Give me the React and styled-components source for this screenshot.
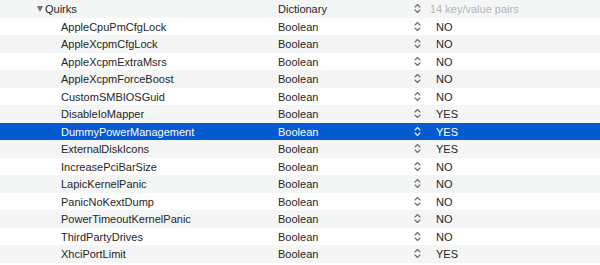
import React from 'react'
import styled, { createGlobalStyle } from 'styled-components'

// Plist editor rows
const Global = createGlobalStyle`
  html, body { margin: 0; padding: 0; background: #fff; }
  body { font-family: "Liberation Sans", Arial, sans-serif; overflow: hidden; }
`

const rows = [
    { key: 'Quirks', type: 'Dictionary', value: '14 key/value pairs', depth: 0, open: true, dim: true },
    { key: 'AppleCpuPmCfgLock', type: 'Boolean', value: 'NO', depth: 1 },
    { key: 'AppleXcpmCfgLock', type: 'Boolean', value: 'NO', depth: 1 },
    { key: 'AppleXcpmExtraMsrs', type: 'Boolean', value: 'NO', depth: 1 },
    { key: 'AppleXcpmForceBoost', type: 'Boolean', value: 'NO', depth: 1 },
    { key: 'CustomSMBIOSGuid', type: 'Boolean', value: 'NO', depth: 1 },
    { key: 'DisableIoMapper', type: 'Boolean', value: 'YES', depth: 1 },
    { key: 'DummyPowerManagement', type: 'Boolean', value: 'YES', depth: 1, selected: true },
    { key: 'ExternalDiskIcons', type: 'Boolean', value: 'YES', depth: 1 },
    { key: 'IncreasePciBarSize', type: 'Boolean', value: 'NO', depth: 1 },
    { key: 'LapicKernelPanic', type: 'Boolean', value: 'NO', depth: 1 },
    { key: 'PanicNoKextDump', type: 'Boolean', value: 'NO', depth: 1 },
    { key: 'PowerTimeoutKernelPanic', type: 'Boolean', value: 'NO', depth: 1 },
    { key: 'ThirdPartyDrives', type: 'Boolean', value: 'NO', depth: 1 },
    { key: 'XhciPortLimit', type: 'Boolean', value: 'YES', depth: 1 },
    { key: 'Misc', type: 'Dictionary', value: '5 key/value pairs', depth: 0, open: false, dim: true },
]

const Table = styled.div`
    display: flex;
    flex-direction: column;
    width: 600px;
    height: 265px;
    overflow: hidden;
`

const Row = styled.div`
    flex: 0 0 17.5px;
    display: grid;
    grid-template-columns: 278px 136px 22px 1fr;
    align-items: center;
    font-size: 11px;
    color: ${p => p.selected ? '#fff' : '#262626'};
    background: ${p => p.selected ? '#0559d1' : (p.odd ? '#fff' : '#f4f5f5')};
`

const KeyCell = styled.div`
    display: flex;
    align-items: center;
    padding-left: ${p => p.depth === 0 ? 37 : 61}px;
    white-space: nowrap;
    padding-top: 1px;
`

const Disclosure = styled.span`
    width: 0;
    height: 0;
    margin-right: 2px;
    ${p => p.open ? `
        border-left: 3.5px solid transparent;
        border-right: 3.5px solid transparent;
        border-top: 6px solid #737373;
        margin-left: 0;
        width: 0;
    ` : `
        border-top: 3.5px solid transparent;
        border-bottom: 3.5px solid transparent;
        border-left: 6px solid #737373;
        margin-left: 1px;
        margin-right: 2px;
    `}
`

const TypeCell = styled.div`
    white-space: nowrap;
    padding-top: 1px;
`

const StepCell = styled.div`
    display: flex;
    align-items: center;
    color: ${p => p.selected ? '#e8eefa' : '#6b6b6b'};
`

const ValueCell = styled.div`
    white-space: nowrap;
    padding-top: 1px;
    padding-left: ${p => p.dim ? 16 : 22}px;
    color: ${p => p.dim ? '#b5b5b5' : 'inherit'};
    margin-left: ${p => p.dim ? -22 : -22}px;
`

const Stepper = () => (
    <svg width="7" height="11" viewBox="0 0 7 11" fill="none" stroke="currentColor" strokeWidth="1.1" strokeLinecap="round" strokeLinejoin="round">
        <path d="M1 4 L3.5 1.5 L6 4" />
        <path d="M1 7 L3.5 9.5 L6 7" />
    </svg>
)

const App = () => (
    <Table>
        <Global />
        {rows.map((r, i) => (
            <Row key={r.key} odd={i % 2 === 1} selected={r.selected}>
                <KeyCell depth={r.depth}>
                    {r.depth === 0 && <Disclosure open={r.open} />}
                    {r.key}
                </KeyCell>
                <TypeCell>{r.type}</TypeCell>
                <StepCell selected={r.selected}><Stepper /></StepCell>
                <ValueCell dim={r.dim}>{r.value}</ValueCell>
            </Row>
        ))}
    </Table>
)

export default App
